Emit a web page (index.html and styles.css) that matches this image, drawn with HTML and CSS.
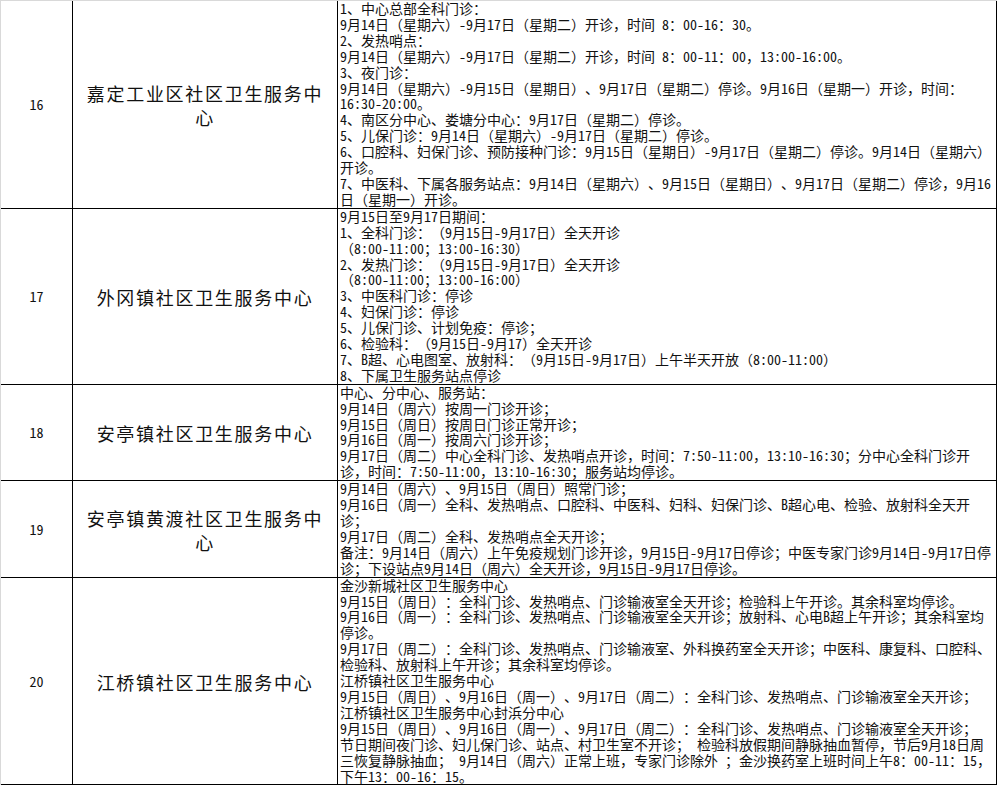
FILE: index.html
```html
<!DOCTYPE html>
<html lang="zh-CN">
<head>
<meta charset="utf-8">
<title>社区卫生服务中心中秋节门诊安排</title>
<link rel="stylesheet" href="styles.css">
</head>
<body>
<div class="sheet">
  <div class="row">
    <div class="cell num">16</div>
    <div class="cell name">嘉定工业区社区卫生服务中心</div>
    <div class="cell detail">
      <div><span class="a">1</span>、中心总部全科门诊：</div>
      <div><span class="a">9</span>月<span class="a">14</span>日（星期六）<span class="a">-9</span>月<span class="a">17</span>日（星期二）开诊，时间<span class="a"> 8</span>：<span class="a">00-16</span>：<span class="a">30</span>。</div>
      <div><span class="a">2</span>、发热哨点：</div>
      <div><span class="a">9</span>月<span class="a">14</span>日（星期六）<span class="a">-9</span>月<span class="a">17</span>日（星期二）开诊，时间<span class="a"> 8</span>：<span class="a">00-11</span>：<span class="a">00</span>，<span class="a">13:00-16:00</span>。</div>
      <div><span class="a">3</span>、夜门诊：</div>
      <div><span class="a">9</span>月<span class="a">14</span>日（星期六）<span class="a">-9</span>月<span class="a">15</span>日（星期日）、<span class="a">9</span>月<span class="a">17</span>日（星期二）停诊。<span class="a">9</span>月<span class="a">16</span>日（星期一）开诊，时间：</div>
      <div><span class="a">16:30-20:00</span>。</div>
      <div><span class="a">4</span>、南区分中心、娄塘分中心：<span class="a">9</span>月<span class="a">17</span>日（星期二）停诊。</div>
      <div><span class="a">5</span>、儿保门诊：<span class="a">9</span>月<span class="a">14</span>日（星期六）<span class="a">-9</span>月<span class="a">17</span>日（星期二）停诊。</div>
      <div><span class="a">6</span>、口腔科、妇保门诊、预防接种门诊：<span class="a">9</span>月<span class="a">15</span>日（星期日）<span class="a">-9</span>月<span class="a">17</span>日（星期二）停诊。<span class="a">9</span>月<span class="a">14</span>日（星期六）</div>
      <div>开诊。</div>
      <div><span class="a">7</span>、中医科、下属各服务站点：<span class="a">9</span>月<span class="a">14</span>日（星期六）、<span class="a">9</span>月<span class="a">15</span>日（星期日）、<span class="a">9</span>月<span class="a">17</span>日（星期二）停诊，<span class="a">9</span>月<span class="a">16</span></div>
      <div>日（星期一）开诊。</div>
    </div>
  </div>
  <div class="row">
    <div class="cell num">17</div>
    <div class="cell name">外冈镇社区卫生服务中心</div>
    <div class="cell detail">
      <div><span class="a">9</span>月<span class="a">15</span>日至<span class="a">9</span>月<span class="a">17</span>日期间：</div>
      <div><span class="a">1</span>、全科门诊：（<span class="a">9</span>月<span class="a">15</span>日<span class="a">-9</span>月<span class="a">17</span>日）全天开诊</div>
      <div>（<span class="a">8:00-11:00</span>；<span class="a">13:00-16:30</span>）</div>
      <div><span class="a">2</span>、发热门诊：（<span class="a">9</span>月<span class="a">15</span>日<span class="a">-9</span>月<span class="a">17</span>日）全天开诊</div>
      <div>（<span class="a">8:00-11:00</span>；<span class="a">13:00-16:00</span>）</div>
      <div><span class="a">3</span>、中医科门诊：停诊</div>
      <div><span class="a">4</span>、妇保门诊：停诊</div>
      <div><span class="a">5</span>、儿保门诊、计划免疫：停诊；</div>
      <div><span class="a">6</span>、检验科：（<span class="a">9</span>月<span class="a">15</span>日<span class="a">-9</span>月<span class="a">17</span>）全天开诊</div>
      <div><span class="a">7</span>、<span class="a">B</span>超、心电图室、放射科：（<span class="a">9</span>月<span class="a">15</span>日<span class="a">-9</span>月<span class="a">17</span>日）上午半天开放（<span class="a">8:00-11:00</span>）</div>
      <div><span class="a">8</span>、下属卫生服务站点停诊</div>
    </div>
  </div>
  <div class="row">
    <div class="cell num">18</div>
    <div class="cell name">安亭镇社区卫生服务中心</div>
    <div class="cell detail">
      <div>中心、分中心、服务站：</div>
      <div><span class="a">9</span>月<span class="a">14</span>日（周六）按周一门诊开诊；</div>
      <div><span class="a">9</span>月<span class="a">15</span>日（周日）按周日门诊正常开诊；</div>
      <div><span class="a">9</span>月<span class="a">16</span>日（周一）按周六门诊开诊；</div>
      <div><span class="a">9</span>月<span class="a">17</span>日（周二）中心全科门诊、发热哨点开诊，时间：<span class="a">7:50-11:00</span>，<span class="a">13:10-16:30</span>；分中心全科门诊开</div>
      <div>诊，时间：<span class="a">7:50-11:00</span>，<span class="a">13:10-16:30</span>；服务站均停诊。</div>
    </div>
  </div>
  <div class="row">
    <div class="cell num">19</div>
    <div class="cell name">安亭镇黄渡社区卫生服务中心</div>
    <div class="cell detail">
      <div><span class="a">9</span>月<span class="a">14</span>日（周六）、<span class="a">9</span>月<span class="a">15</span>日（周日）照常门诊；</div>
      <div><span class="a">9</span>月<span class="a">16</span>日（周一）全科、发热哨点、口腔科、中医科、妇科、妇保门诊、<span class="a">B</span>超心电、检验、放射科全天开</div>
      <div>诊；</div>
      <div><span class="a">9</span>月<span class="a">17</span>日（周二）全科、发热哨点全天开诊；</div>
      <div>备注：<span class="a">9</span>月<span class="a">14</span>日（周六）上午免疫规划门诊开诊，<span class="a">9</span>月<span class="a">15</span>日<span class="a">-9</span>月<span class="a">17</span>日停诊；中医专家门诊<span class="a">9</span>月<span class="a">14</span>日<span class="a">-9</span>月<span class="a">17</span>日停</div>
      <div>诊；下设站点<span class="a">9</span>月<span class="a">14</span>日（周六）全天开诊，<span class="a">9</span>月<span class="a">15</span>日<span class="a">-9</span>月<span class="a">17</span>日停诊。</div>
    </div>
  </div>
  <div class="row">
    <div class="cell num">20</div>
    <div class="cell name">江桥镇社区卫生服务中心</div>
    <div class="cell detail">
      <div>金沙新城社区卫生服务中心</div>
      <div><span class="a">9</span>月<span class="a">15</span>日（周日）：全科门诊、发热哨点、门诊输液室全天开诊；检验科上午开诊。其余科室均停诊。</div>
      <div><span class="a">9</span>月<span class="a">16</span>日（周一）：全科门诊、发热哨点、门诊输液室全天开诊；放射科、心电<span class="a">B</span>超上午开诊；其余科室均</div>
      <div>停诊。</div>
      <div><span class="a">9</span>月<span class="a">17</span>日（周二）：全科门诊、发热哨点、门诊输液室、外科换药室全天开诊；中医科、康复科、口腔科、</div>
      <div>检验科、放射科上午开诊；其余科室均停诊。</div>
      <div>江桥镇社区卫生服务中心</div>
      <div><span class="a">9</span>月<span class="a">15</span>日（周日）、<span class="a">9</span>月<span class="a">16</span>日（周一）、<span class="a">9</span>月<span class="a">17</span>日（周二）：全科门诊、发热哨点、门诊输液室全天开诊；</div>
      <div>江桥镇社区卫生服务中心封浜分中心</div>
      <div><span class="a">9</span>月<span class="a">15</span>日（周日）、<span class="a">9</span>月<span class="a">16</span>日（周一）、<span class="a">9</span>月<span class="a">17</span>日（周二）：全科门诊、发热哨点、门诊输液室全天开诊；</div>
      <div>节日期间夜门诊、妇儿保门诊、站点、村卫生室不开诊；<span class="a"> </span>检验科放假期间静脉抽血暂停，节后<span class="a">9</span>月<span class="a">18</span>日周</div>
      <div>三恢复静脉抽血；<span class="a"> 9</span>月<span class="a">14</span>日（周六）正常上班，专家门诊除外<span class="a"> </span>；金沙换药室上班时间上午<span class="a">8</span>：<span class="a">00-11</span>：<span class="a">15</span>，</div>
      <div>下午<span class="a">13</span>：<span class="a">00-16</span>：<span class="a">15</span>。</div>
    </div>
  </div>
</div>
</body>
</html>
```

FILE: styles.css
```css
* {
  box-sizing: border-box;
}

html, body {
  margin: 0;
  padding: 0;
  background: #ffffff;
}

body {
  font-family: "Noto Sans CJK SC", "Noto Sans", sans-serif;
  color: #111111;
  text-spacing-trim: space-all;
}

.sheet {
  width: 997px;
  border-left: 1px solid #d9d9d9;
  border-top: 1px solid #d9d9d9;
}

.row {
  display: grid;
  grid-template-columns: 72px 265px 659px;
  border-bottom: 1px solid #000000;
}

.cell {
  border-right: 1px solid #000000;
}

.num {
  display: flex;
  align-items: center;
  justify-content: center;
  font-size: 14px;
  padding-top: 0;
  font-feature-settings: "hwid" 1;
}

.name {
  display: flex;
  align-items: center;
  justify-content: center;
  text-align: center;
  padding: 2px 8px 0 8px;
  font-size: 18px;
  line-height: 24px;
  letter-spacing: 1.7px;
}

.detail {
  padding-left: 2px;
  font-size: 14px;
  line-height: 15.9px;
  white-space: nowrap;
  overflow: hidden;
}

.a {
  font-feature-settings: "hwid" 1;
}
```
